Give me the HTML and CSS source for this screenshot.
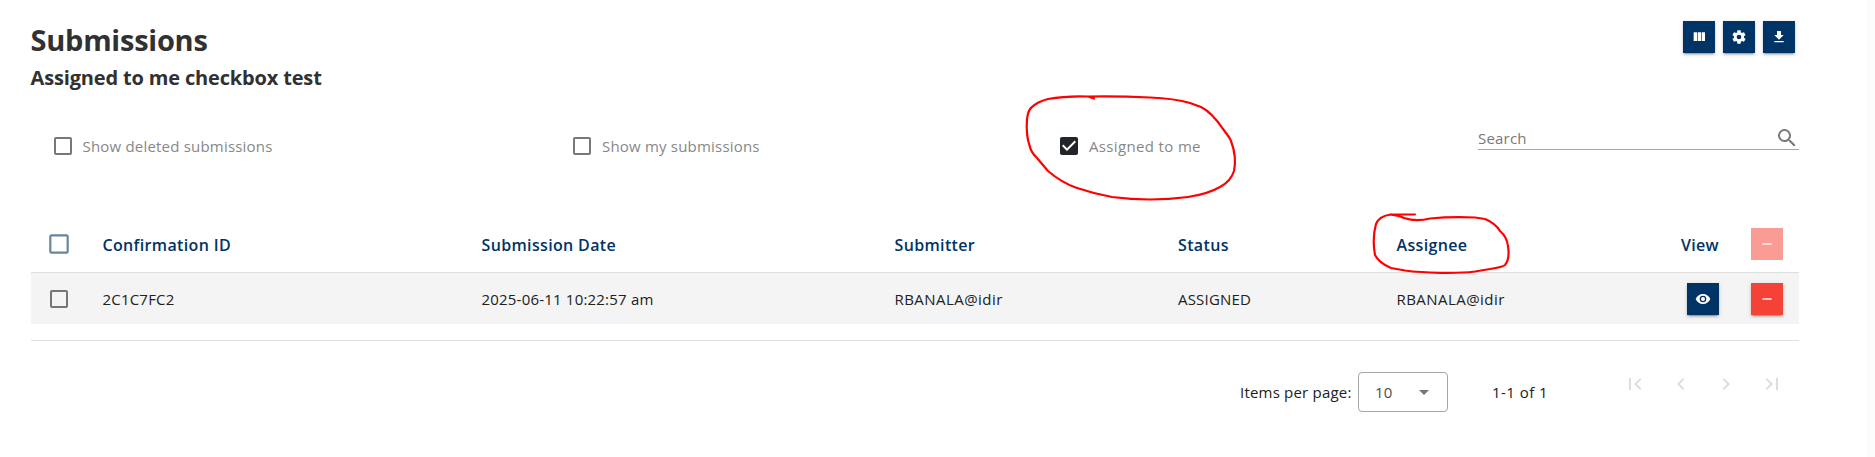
FILE: index.html
```html
<!DOCTYPE html>
<html lang="en">
<head>
<meta charset="utf-8">
<title>Submissions</title>
<link rel="stylesheet" href="styles.css">
</head>
<body>
<svg class="defs" width="0" height="0">
  <symbol id="box" viewBox="0 0 24 24"><path d="M19,3H5C3.89,3 3,3.89 3,5V19A2,2 0 0,0 5,21H19A2,2 0 0,0 21,19V5C21,3.89 20.1,3 19,3M19,5V19H5V5H19Z"/></symbol>
  <symbol id="minus" viewBox="0 0 24 24"><path d="M19,13H5V11H19V13Z"/></symbol>
</svg>
<main class="page">
  <header class="top">
    <div>
      <h1 class="title">Submissions</h1>
      <h2 class="subtitle">Assigned to me checkbox test</h2>
    </div>
    <div class="actions">
      <button class="btn"><svg class="ic" viewBox="0 0 24 24"><path d="M16,5V18H21V5M4,18H9V5H4M10,18H15V5H10V18Z"/></svg></button>
      <button class="btn"><svg class="ic" viewBox="0 0 24 24"><path d="M12,15.5A3.5,3.5 0 0,1 8.5,12A3.5,3.5 0 0,1 12,8.5A3.5,3.5 0 0,1 15.5,12A3.5,3.5 0 0,1 12,15.5M19.43,12.97C19.47,12.65 19.5,12.33 19.5,12C19.5,11.67 19.47,11.34 19.43,11L21.54,9.37C21.73,9.22 21.78,8.95 21.66,8.73L19.66,5.27C19.54,5.05 19.27,4.96 19.05,5.05L16.56,6.05C16.04,5.66 15.5,5.32 14.87,5.07L14.5,2.42C14.46,2.18 14.25,2 14,2H10C9.75,2 9.54,2.18 9.5,2.42L9.13,5.07C8.5,5.32 7.96,5.66 7.44,6.05L4.95,5.05C4.73,4.96 4.46,5.05 4.34,5.27L2.34,8.73C2.21,8.95 2.27,9.22 2.46,9.37L4.57,11C4.53,11.34 4.5,11.67 4.5,12C4.5,12.33 4.53,12.65 4.57,12.97L2.46,14.63C2.27,14.78 2.21,15.05 2.34,15.27L4.34,18.73C4.46,18.95 4.73,19.03 4.95,18.95L7.44,17.94C7.96,18.34 8.5,18.68 9.13,18.93L9.5,21.58C9.54,21.82 9.75,22 10,22H14C14.25,22 14.46,21.82 14.5,21.58L14.87,18.93C15.5,18.67 16.04,18.34 16.56,17.94L19.05,18.95C19.27,19.03 19.54,18.95 19.66,18.73L21.66,15.27C21.78,15.05 21.73,14.78 21.54,14.63L19.43,12.97Z"/></svg></button>
      <button class="btn"><svg class="ic" viewBox="0 0 24 24"><path d="M5,20H19V18H5M19,9H15V3H9V9H5L12,16L19,9Z"/></svg></button>
    </div>
  </header>

  <section class="filters">
    <label class="check"><svg class="cb" viewBox="0 0 24 24"><use href="#box"/></svg><span class="lbl">Show deleted submissions</span></label>
    <label class="check"><svg class="cb" viewBox="0 0 24 24"><use href="#box"/></svg><span class="lbl">Show my submissions</span></label>
    <label class="check"><svg class="cb on" viewBox="0 0 24 24"><path d="M10,17L5,12L6.41,10.58L10,14.17L17.59,6.58L19,8M19,3H5C3.89,3 3,3.89 3,5V19C3,20.1 3.9,21 5,21H19C20.1,21 21,20.1 21,19V5C21,3.89 20.1,3 19,3Z"/></svg><span class="lbl loose">Assigned to me</span></label>
    <div class="search"><span>Search</span><svg class="cb" viewBox="0 0 24 24"><path d="M9.5,3A6.5,6.5 0 0,1 16,9.5C16,11.11 15.41,12.59 14.44,13.73L14.71,14H15.5L20.5,19L19,20.5L14,15.5V14.71L13.73,14.44C12.59,15.41 11.11,16 9.5,16A6.5,6.5 0 0,1 3,9.5A6.5,6.5 0 0,1 9.5,3M9.5,5C7,5 5,7 5,9.5C5,12 7,14 9.5,14C12,14 14,12 14,9.5C14,7 12,5 9.5,5Z"/></svg></div>
  </section>

  <section class="table">
    <div class="row head">
      <span class="sel"><svg class="cb wide" viewBox="0 0 24 24"><use href="#box"/></svg></span>
      <span class="th">Confirmation ID</span><span class="th">Submission Date</span><span class="th">Submitter</span><span class="th">Status</span>
      <span class="th">Assignee</span><span class="th end">View</span>
      <span class="end"><button class="btn red off"><svg class="ic" viewBox="0 0 24 24"><use href="#minus"/></svg></button></span>
    </div>
    <div class="row item">
      <span class="sel"><svg class="cb" viewBox="0 0 24 24"><use href="#box"/></svg></span>
      <span>2C1C7FC2</span><span>2025-06-11 10:22:57 am</span><span class="user">RBANALA@idir</span><span>ASSIGNED</span>
      <span class="user">RBANALA@idir</span>
      <span class="end"><button class="btn"><svg class="ic" viewBox="0 0 24 24"><path d="M12,9A3,3 0 0,0 9,12A3,3 0 0,0 12,15A3,3 0 0,0 15,12A3,3 0 0,0 12,9M12,17A5,5 0 0,1 7,12A5,5 0 0,1 12,7A5,5 0 0,1 17,12A5,5 0 0,1 12,17M12,4.5C7,4.5 2.73,7.61 1,12C2.73,16.39 7,19.5 12,19.5C17,19.5 21.27,16.39 23,12C21.27,7.61 17,4.5 12,4.5Z"/></svg></button></span>
      <span class="end"><button class="btn red"><svg class="ic" viewBox="0 0 24 24"><use href="#minus"/></svg></button></span>
    </div>
  </section>

  <footer class="pager">
    <span class="per">Items per page:</span>
    <div class="select"><span>10</span><svg class="caret" viewBox="0 0 10 5"><path d="M0,0H10L5,5Z"/></svg></div>
    <span class="range">1-1 of 1</span>
    <nav class="nav">
      <svg viewBox="0 0 24 24"><path d="M18.41,16.59L13.82,12L18.41,7.41L17,6L11,12L17,18L18.41,16.59M6,6H8V18H6V6Z"/></svg>
      <svg viewBox="0 0 24 24"><path d="M15.41,16.58L10.83,12L15.41,7.41L14,6L8,12L14,18L15.41,16.58Z"/></svg>
      <svg viewBox="0 0 24 24"><path d="M8.59,16.58L13.17,12L8.59,7.41L10,6L16,12L10,18L8.59,16.58Z"/></svg>
      <svg viewBox="0 0 24 24"><path d="M5.59,7.41L10.18,12L5.59,16.59L7,18L13,12L7,6L5.59,7.41M16,6H18V18H16V6Z"/></svg>
    </nav>
  </footer>
</main>
<!-- Hand-drawn marks over the page -->
<svg class="ink" viewBox="0 0 1875 457">
  <path d="M1094,98.500L1088,96.500C1075,96 1059,97 1048,99Q1037,102 1032,107Q1028,110 1027,119C1026,132 1027,139 1030,147Q1031,152 1037,158L1048,171Q1062,183 1077,188Q1095,194 1112,197Q1150,202 1188,197Q1208,194 1220,187Q1231,181 1234,171Q1237,157 1231,141Q1230,138 1223,129C1217,120 1211,112 1201,107L1190,103Q1175,98.500 1150,97.500Q1120,96 1088,96.500"/>
  <path d="M1391,214.500H1415M1390,214.500Q1400,216 1404,218Q1416,222 1430,218.500Q1451,216.500 1475,217.500L1485,219Q1495,223 1500,231Q1507,237 1508,246Q1510,259 1505,265Q1503,267 1490,269L1475,271.500C1456,274 1424,273 1405,270.500L1391,268Q1379,263 1375,255Q1372,238 1376,224Q1379,216 1391,214.500"/>
</svg>
</body>
</html>
```
FILE: styles.css
```css
* { box-sizing: border-box; }
body {
  margin: 0;
  height: 457px;
  overflow: hidden;
  background: #fcfcfc;
  color: #212121;
  font: 15px/24px "Open Sans", "Noto Sans", sans-serif;
  letter-spacing: 0.2px;
}
.defs { position: absolute; }
.page { width: 1867px; height: 457px; padding: 20px 68px 0 31px; background: #fff; }
svg { display: block; fill: currentColor; }

.top { display: flex; justify-content: space-between; height: 108px; padding-right: 4px; }
.title, .subtitle { margin: 0; color: #313132; font-weight: 700; }
.title { margin-left: -0.5px; font-size: 29px; line-height: 40px; letter-spacing: -0.25px; }
.subtitle { margin-top: 4px; margin-left: -0.5px; font-size: 20px; line-height: 28px; letter-spacing: -0.16px; }
.actions { display: flex; gap: 8px; padding-top: 1px; }
.btn {
  display: flex; align-items: center; justify-content: center;
  width: 32px; height: 32px; padding: 0; border: 0;
  background: #003366; color: #fff;
  box-shadow: 0 3px 1px -2px rgba(0,0,0,.2), 0 2px 2px rgba(0,0,0,.14), 0 1px 5px rgba(0,0,0,.12);
}
.btn.red { background: #f44336; }
.btn.off { background: #fa9b94; box-shadow: none; }
.ic { width: 16px; height: 16px; }

.filters { display: grid; grid-template-columns: 519.5px 487px 421px 1fr; height: 92px; padding-left: 19.5px; color: #87878a; }
.check { display: flex; align-items: center; height: 36px; }
.cb { width: 24px; height: 24px; color: #77777c; }
.cb.on { color: #212529; }
.lbl { margin-left: 8px; }
.loose { letter-spacing: 0.35px; }
.search {
  display: flex; justify-content: space-between; align-items: flex-end;
  height: 22px; border-bottom: 1px solid #a6a6a8; color: #77777a;
}
.search span { line-height: 22px; }
.search .cb { margin-bottom: -1px; margin-right: 0.5px; }

.table { height: 121px; border-bottom: 1px solid #e0e0e0; }
.row { display: grid; grid-template-columns: 71.5px 379px 413px 283.5px 218.5px 222.500px 100px 64px; align-items: center; }
.sel { padding-left: 15.5px; }
.end { display: flex; justify-content: flex-end; }
.head { height: 53px; padding-bottom: 5px; border-bottom: 1px solid #dedede; color: #003366; font-size: 16px; font-weight: 600; letter-spacing: 0.35px; }
.th { padding-top: 2px; }
.head .cb { width: 26px; height: 26px; margin-left: -1px; color: #6685a3; }
.item { height: 51px; background: #f4f4f4; }
.item .cb { color: #757575; }
.user { letter-spacing: 0.45px; }

.pager { display: flex; padding: 31px 0 0 1209px; }
.per { width: 118px; line-height: 40px; }
.select {
  display: flex; align-items: center; justify-content: space-between;
  width: 90px; height: 40px; padding: 0 18px 0 16px;
  border: 1px solid #a6a6a6; border-radius: 4px; color: #4d4d4d;
}
.caret { width: 10px; height: 5px; color: #757575; }
.range { width: 129px; padding-left: 44px; line-height: 40px; letter-spacing: 0.45px; white-space: nowrap; }
.nav { display: flex; gap: 21.5px; margin-left: 46px; color: #dedede; }
.nav svg { width: 24px; height: 24px; }
.ink { position: absolute; left: 0; top: 0; width: 1875px; height: 457px; fill: none; stroke: #f00; stroke-width: 2.2; stroke-linecap: round; stroke-linejoin: round; pointer-events: none; }
```
